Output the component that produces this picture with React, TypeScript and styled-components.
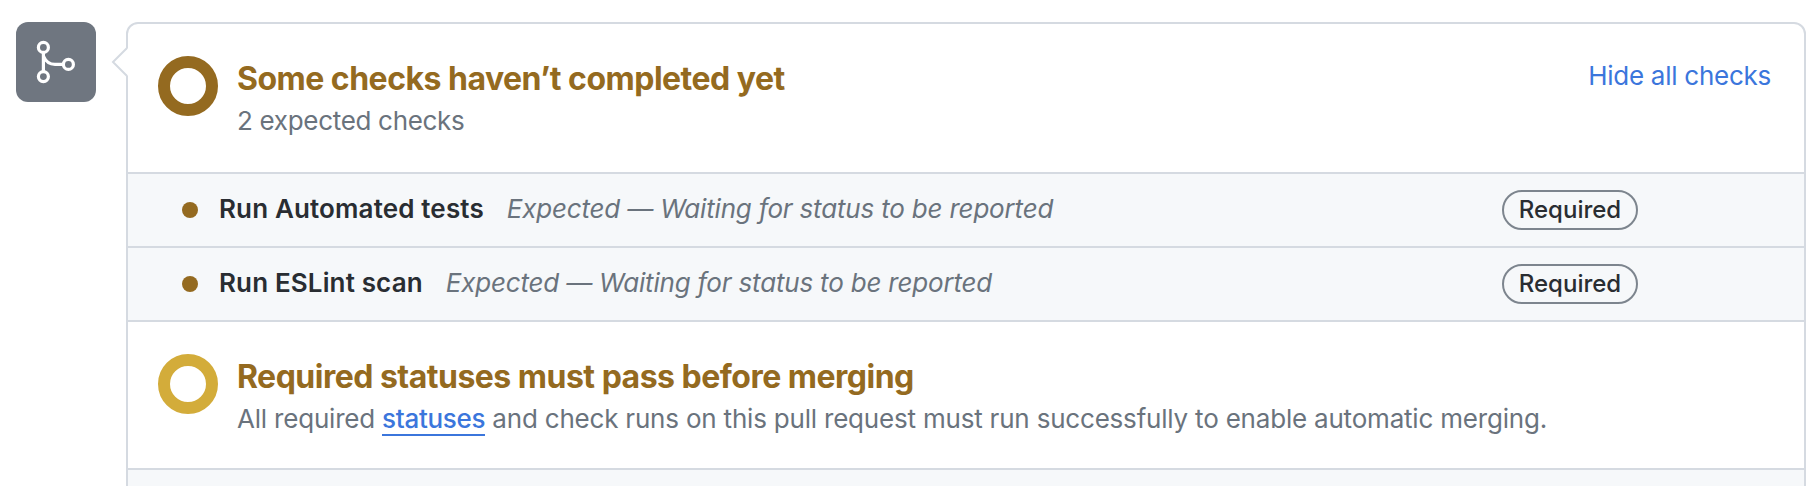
import React from "react";
import styled, { createGlobalStyle } from "styled-components";

const Global = createGlobalStyle`
  * { box-sizing: border-box; }
  body { margin: 0; background: #fff; overflow: hidden; }
`;

const Page = styled.main`
  display: flex;
  align-items: flex-start;
  gap: 30px;
  height: 486px;
  padding: 22px 10px 0 16px;
  overflow: hidden;
  background: #fff;
  font-family: Inter, "Liberation Sans", sans-serif;
  font-size: 26px;
  line-height: 40px;
  color: #6a737d;
  white-space: nowrap;
`;

const MergeBadge = styled.div`
  flex: none;
  width: 80px;
  height: 80px;
  border-radius: 12px;
  background: #6f7680;
`;

const Card = styled.section`
  position: relative;
  flex: 1;
  height: 520px;
  border: 2px solid #d5dae1;
  border-radius: 12px;
`;

const Pointer = styled.svg`
  position: absolute;
  left: -18px;
  top: 21px;
`;

const Summary = styled.div<{ $height: number }>`
  display: flex;
  align-items: flex-start;
  height: ${(p) => p.$height}px;
  padding: 32px 33px 0 30px;
  border-bottom: 2px solid #d5dae1;
`;

const Ring = styled.span<{ $color: string }>`
  flex: none;
  width: 60px;
  height: 60px;
  margin-right: 19px;
  border: 12px solid ${(p) => p.$color};
  border-radius: 50%;
`;

const Copy = styled.div`
  flex: 1;
  margin-top: 3px;
`;

const Title = styled.h3`
  margin: 0 0 2px;
  font-size: 32px;
  font-weight: 650;
  line-height: 40px;
  letter-spacing: -0.51px;
  color: #946a20;
`;

const Detail = styled.p<{ $spacing: number }>`
  margin: 0;
  letter-spacing: ${(p) => p.$spacing}px;
`;

const StatusLink = styled.a`
  color: #3b76dc;
  font-weight: 500;
  letter-spacing: -0.3px;
  border-bottom: 2px solid #3b76dc;
`;

const Toggle = styled.a`
  letter-spacing: -0.26px;
  color: #3b76dc;
`;

const CheckRow = styled.div`
  display: flex;
  align-items: center;
  height: 74px;
  padding: 0 166px 0 54px;
  background: #f6f8fa;
  border-bottom: 2px solid #d5dae1;
`;

const Dot = styled.span`
  width: 16px;
  height: 16px;
  margin-right: 21px;
  border-radius: 50%;
  background: #946a20;
`;

const Name = styled.strong`
  margin-right: 23px;
  padding-bottom: 2px;
  font-weight: 600;
  letter-spacing: 0.14px;
  color: #292d32;
`;

const Status = styled.em`
  flex: 1;
  padding-bottom: 2px;
  letter-spacing: -0.19px;
`;

const Required = styled.span`
  display: flex;
  align-items: center;
  justify-content: center;
  width: 136px;
  height: 40px;
  border: 2px solid #7d858e;
  border-radius: 20px;
  font-size: 24px;
  font-weight: 500;
  color: #292d32;
`;

const Footer = styled.div`
  height: 50px;
  background: #f6f8fa;
`;

const checks = ["Run Automated tests", "Run ESLint scan"];

export default function App() {
  return (
    <Page>
      <Global />
      <MergeBadge>
        <svg width="80" height="80" fill="none" stroke="#fff" strokeWidth="3.2">
          <circle cx="27.4" cy="25.4" r="5" />
          <circle cx="27.4" cy="54.6" r="5" />
          <circle cx="52.4" cy="42.4" r="5" />
          <path d="M27.4 30.5V49.5M27.4 34C29.5 39 34 42.4 39 42.4H47.5" />
        </svg>
      </MergeBadge>
      <Card>
        <Pointer width="18" height="34" fill="none">
          <path d="M18 3L3 17L18 31Z" fill="#fff" />
          <path d="M17 3L3 17L17 31" stroke="#d5dae1" strokeWidth="2" />
        </Pointer>
        <Summary $height={150}>
          <Ring $color="#946a20" />
          <Copy>
            <Title>Some checks haven’t completed yet</Title>
            <Detail $spacing={-0.31}>2 expected checks</Detail>
          </Copy>
          <Toggle>Hide all checks</Toggle>
        </Summary>
        {checks.map((name) => (
          <CheckRow key={name}>
            <Dot />
            <Name>{name}</Name>
            <Status>Expected — Waiting for status to be reported</Status>
            <Required>Required</Required>
          </CheckRow>
        ))}
        <Summary $height={148}>
          <Ring $color="#d3ac3a" />
          <Copy>
            <Title>Required statuses must pass before merging</Title>
            <Detail $spacing={-0.2}>
              All required <StatusLink>statuses</StatusLink> and check runs on this pull request must run
              successfully to enable automatic merging.
            </Detail>
          </Copy>
        </Summary>
        <Footer />
      </Card>
    </Page>
  );
}
